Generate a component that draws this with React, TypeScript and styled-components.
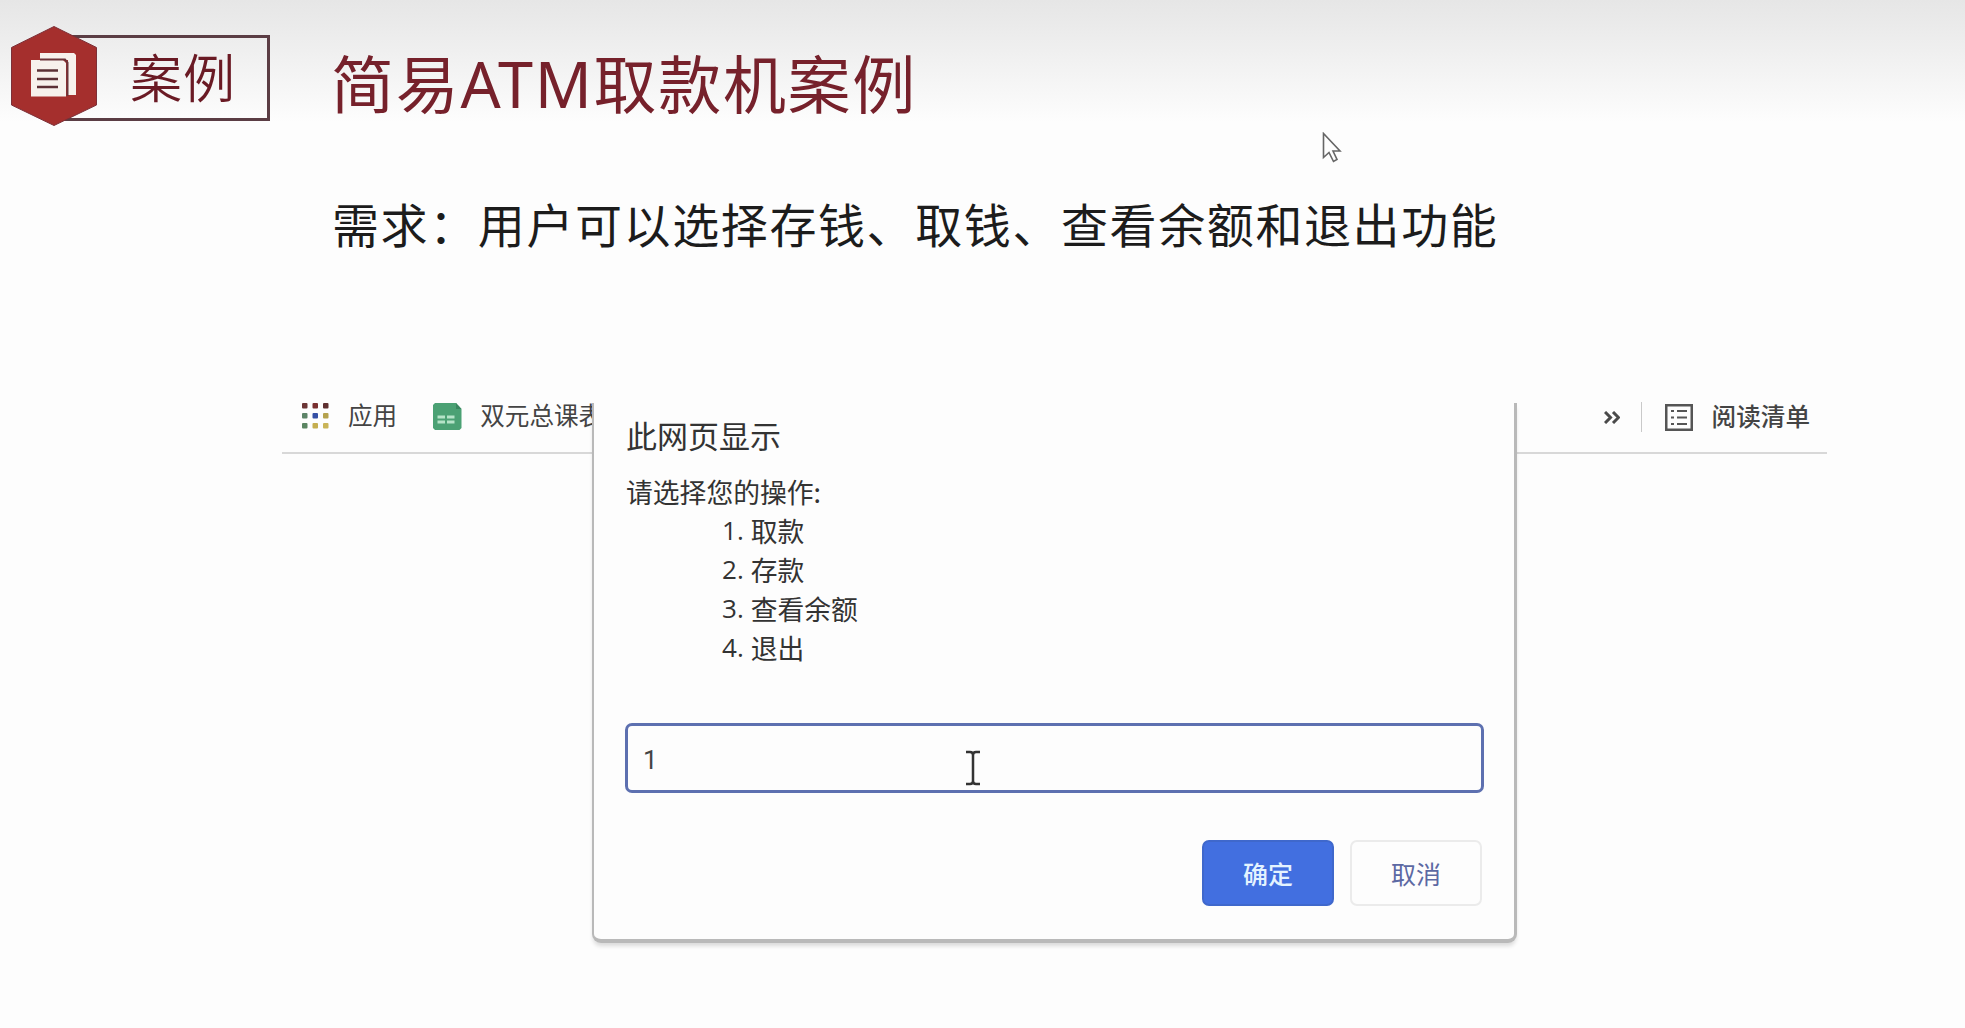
import React, { useState } from 'react';
import styled, { createGlobalStyle } from 'styled-components';

const GlobalStyle = createGlobalStyle`
  * {
    box-sizing: border-box;
  }
  body {
    margin: 0;
    background-color: #fdfdfd;
    font-family: 'Noto Sans CJK SC', sans-serif;
  }
`;

const bookmarks = [
  { name: '应用', icon: 'apps' },
  { name: '双元总课表', icon: 'sheet' },
];

const operations = ['取款', '存款', '查看余额', '退出'];

const Slide = styled.div`
  position: relative;
  width: 1965px;
  height: 1028px;
  overflow: hidden;
  display: flex;
  flex-direction: column;
  background: linear-gradient(#e6e6e6 0, #efefef 50px, #fdfdfd 122px);
`;

const Header = styled.header`
  display: flex;
  align-items: flex-start;
  padding: 26px 0 0 11px;
  height: 170px;
`;

const Badge = styled.div`
  display: flex;
  align-items: center;
  width: 259px;
  height: 100px;
`;

const BadgeLabel = styled.div`
  flex: 1;
  height: 86px;
  margin: 3px 0 0 -36px;
  padding-left: 66px;
  border: 3px solid #5b3d44;
  font-size: 52px;
  font-weight: 350;
  letter-spacing: 1px;
  line-height: 76px;
  color: #6a1a24;
  white-space: nowrap;
`;

const HexIcon = styled.svg`
  position: relative;
  flex: none;
`;

const Title = styled.h1`
  margin: 13px 0 0 61px;
  font-family: 'Noto Sans', 'Noto Sans CJK SC', sans-serif;
  font-size: 63px;
  font-weight: 400;
  letter-spacing: 1.7px;
  line-height: 90px;
  color: #76212b;
  white-space: nowrap;
`;

const Requirement = styled.p`
  margin: 18px 0 0 332px;
  font-size: 47px;
  font-weight: 400;
  letter-spacing: 1.6px;
  line-height: 70px;
  color: #1c1c1c;
  white-space: nowrap;
`;

const Browser = styled.section`
  position: relative;
  width: 1545px;
  margin: 145px 0 0 282px;
`;

const BookmarkBar = styled.div`
  display: flex;
  align-items: flex-start;
  height: 51px;
  padding-left: 20px;
  border-bottom: 2px solid #d8d8d8;
  font-size: 24.6px;
  line-height: 25px;
  color: #444;
  white-space: nowrap;
`;

const Bookmark = styled.div<{ $gap: number }>`
  display: flex;
  align-items: center;
  gap: ${({ $gap }) => $gap}px;
  margin-right: 36px;
`;

const BookmarkName = styled.span`
  margin-top: -4px;
`;

const BarEnd = styled.div`
  display: flex;
  align-items: center;
  margin: -1px 17px 0 auto;
`;

const Divider = styled.span`
  width: 1px;
  height: 30px;
  margin: 0 23px 0 21px;
  background-color: #c9c9c9;
`;

const ReadingList = styled.span`
  margin: -4px 0 0 19px;
  font-weight: 500;
`;

// sits over the bookmark bar, top edge is cut off
const Dialog = styled.div`
  position: absolute;
  top: 0;
  left: 310px;
  width: 925px;
  height: 540px;
  padding: 14px 32px 0 32px;
  background-color: #fdfdfd;
  border: solid #b9b9b9;
  border-width: 0 3px 4px 2px;
  border-radius: 0 0 9px 9px;
  box-shadow: 0 4px 4px -1px rgba(0, 0, 0, 0.14);
  color: #333;
`;

const DialogTitle = styled.h2`
  margin: 0;
  font-size: 31px;
  font-weight: 400;
  line-height: 36px;
`;

const Message = styled.div`
  margin-top: 19px;
  font-size: 26.8px;
  line-height: 39px;
`;

const Operations = styled.ol`
  margin: 0;
  padding: 0 0 0 96px;
  list-style: none;
`;

const Operation = styled.li`
  display: flex;
  gap: 7px;
`;

const OperationNumber = styled.span`
  font-family: 'Open Sans', 'Noto Sans', sans-serif;
  font-size: 26px;
`;

const PromptInput = styled.input`
  display: block;
  width: 859px;
  height: 70px;
  margin: 56px 0 0 -1px;
  padding: 3px 15px 0;
  border: 3px solid #5d70b0;
  border-radius: 7px;
  outline: none;
  background-color: #fdfdfd;
  font-family: Roboto, sans-serif;
  font-size: 26px;
  color: #444;
`;

const Actions = styled.div`
  display: flex;
  justify-content: flex-end;
  gap: 16px;
  margin-top: 47px;
`;

const Button = styled.button<{ $primary?: boolean }>`
  width: 132px;
  height: 66px;
  padding: 0 0 1px;
  border: 2px solid ${({ $primary }) => ($primary ? '#3f68cc' : '#ebebeb')};
  border-radius: 7px;
  background-color: ${({ $primary }) => ($primary ? '#426fe0' : '#fdfdfd')};
  color: ${({ $primary }) => ($primary ? '#e4f3ff' : '#5c69a3')};
  font-family: inherit;
  font-size: 25px;
  font-weight: ${({ $primary }) => ($primary ? 500 : 400)};
`;

const Pointer = styled.svg<{ $x: number; $y: number }>`
  position: absolute;
  left: ${({ $x }) => $x}px;
  top: ${({ $y }) => $y}px;
`;

const CaseIcon = () => (
  <HexIcon width="86" height="100" viewBox="0 0 86 100">
    <path d="M43 .5 85.500 21.500V79L43 99.500.5 79V21.500Z" fill="#a52f2d" stroke="#7c3038" />
    <path d="M29 27h34l2 2v40h-8V34H29Z" fill="#f7f1ec" />
    <path d="M20 34h32l3 3v33.500H20Z" fill="#f7f1ec" />
    <path d="M29 33.500h25l2.500 3V70" fill="none" stroke="#6b3338" strokeWidth="2" />
    <path d="M26 44.500h21M26 53h21M26 61h21" stroke="#5b3035" strokeWidth="2.500" />
  </HexIcon>
);

const dots = [
  ['#6b3535', '#7a3030', '#5f3030'],
  ['#5d8468', '#3550a5', '#b5a24e'],
  ['#5b8562', '#c5ae4f', '#c9b458'],
];

const AppsIcon = () => (
  <svg width="27" height="26" viewBox="0 0 27 26">
    {dots.map((row, y) =>
      row.map((fill, x) => (
        <rect
          key={`${x}-${y}`}
          x={x * 10.5}
          y={y * 10}
          width="5.5"
          height="5.500"
          rx="1"
          fill={fill}
        />
      ))
    )}
  </svg>
);

const SheetIcon = () => (
  <svg width="29" height="27" viewBox="0 0 29 27">
    <path d="M2 0h21l5.500 6v19l-2 2H2l-2-2V2Z" fill="#4ba174" />
    <path d="M23 0v6h5.500Z" fill="#3a8660" />
    <path
      d="M4.500 14h7.500M14 14h7.500M4.500 19h7.500M14 19h7.500"
      stroke="#b5e3c8"
      strokeWidth="3"
    />
  </svg>
);

const ListIcon = () => (
  <svg width="28" height="27" viewBox="0 0 28 27" fill="none" stroke="#555">
    <rect x="1.250" y="1.250" width="25.500" height="24.500" strokeWidth="2.500" />
    <path
      d="M6 7h3M12 7h10M6 13.500h3M12 13.500h10M6 20h3M12 20h10"
      strokeWidth="2.200"
    />
  </svg>
);

const MoreIcon = () => (
  <svg width="16" height="13" viewBox="0 0 16 13" fill="none">
    <path
      d="m1 1 5.500 5.500L1 12M9 1l5.500 5.500L9 12"
      stroke="#4a4a4a"
      strokeWidth="3"
    />
  </svg>
);

function App() {
  const [value, setValue] = useState('1');

  return (
    <Slide>
      <GlobalStyle />
      <Header>
        <Badge>
          <CaseIcon />
          <BadgeLabel>案例</BadgeLabel>
        </Badge>
        <Title>简易ATM取款机案例</Title>
      </Header>
      <Requirement>需求：用户可以选择存钱、取钱、查看余额和退出功能</Requirement>
      <Browser>
        <BookmarkBar>
          {bookmarks.map(({ name, icon }) => (
            <Bookmark key={name} $gap={icon === 'apps' ? 19 : 18}>
              {icon === 'apps' ? <AppsIcon /> : <SheetIcon />}
              <BookmarkName>{name}</BookmarkName>
            </Bookmark>
          ))}
          <BarEnd>
            <MoreIcon />
            <Divider />
            <ListIcon />
            <ReadingList>阅读清单</ReadingList>
          </BarEnd>
        </BookmarkBar>
        <Dialog>
          <DialogTitle>此网页显示</DialogTitle>
          <Message>
            请选择您的操作:
            <Operations>
              {operations.map((name, index) => (
                <Operation key={name}>
                  <OperationNumber>{index + 1}.</OperationNumber>
                  {name}
                </Operation>
              ))}
            </Operations>
          </Message>
          <PromptInput
            value={value}
            onChange={(e) => setValue(e.target.value)}
          />
          <Actions>
            <Button $primary>确定</Button>
            <Button>取消</Button>
          </Actions>
        </Dialog>
      </Browser>
      <Pointer $x={1322} $y={132} width="20" height="31" viewBox="0 0 20 31">
        <path
          d="M1.500 1.500v24l5.500-5 4.500 9 3.500-2-4-8.500h7Z"
          fill="#fdfdfd"
          stroke="#666"
          strokeWidth="1.600"
        />
      </Pointer>
      <Pointer $x={965} $y={750} width="16" height="36" viewBox="0 0 16 36">
        <path
          d="M1 2h4q3 0 3 3 0-3 3-3h4M8 4v28M1 34h4q3 0 3-3 0 3 3 3h4"
          fill="none"
          stroke="#333"
          strokeWidth="2.500"
        />
      </Pointer>
    </Slide>
  );
}

export default App;
